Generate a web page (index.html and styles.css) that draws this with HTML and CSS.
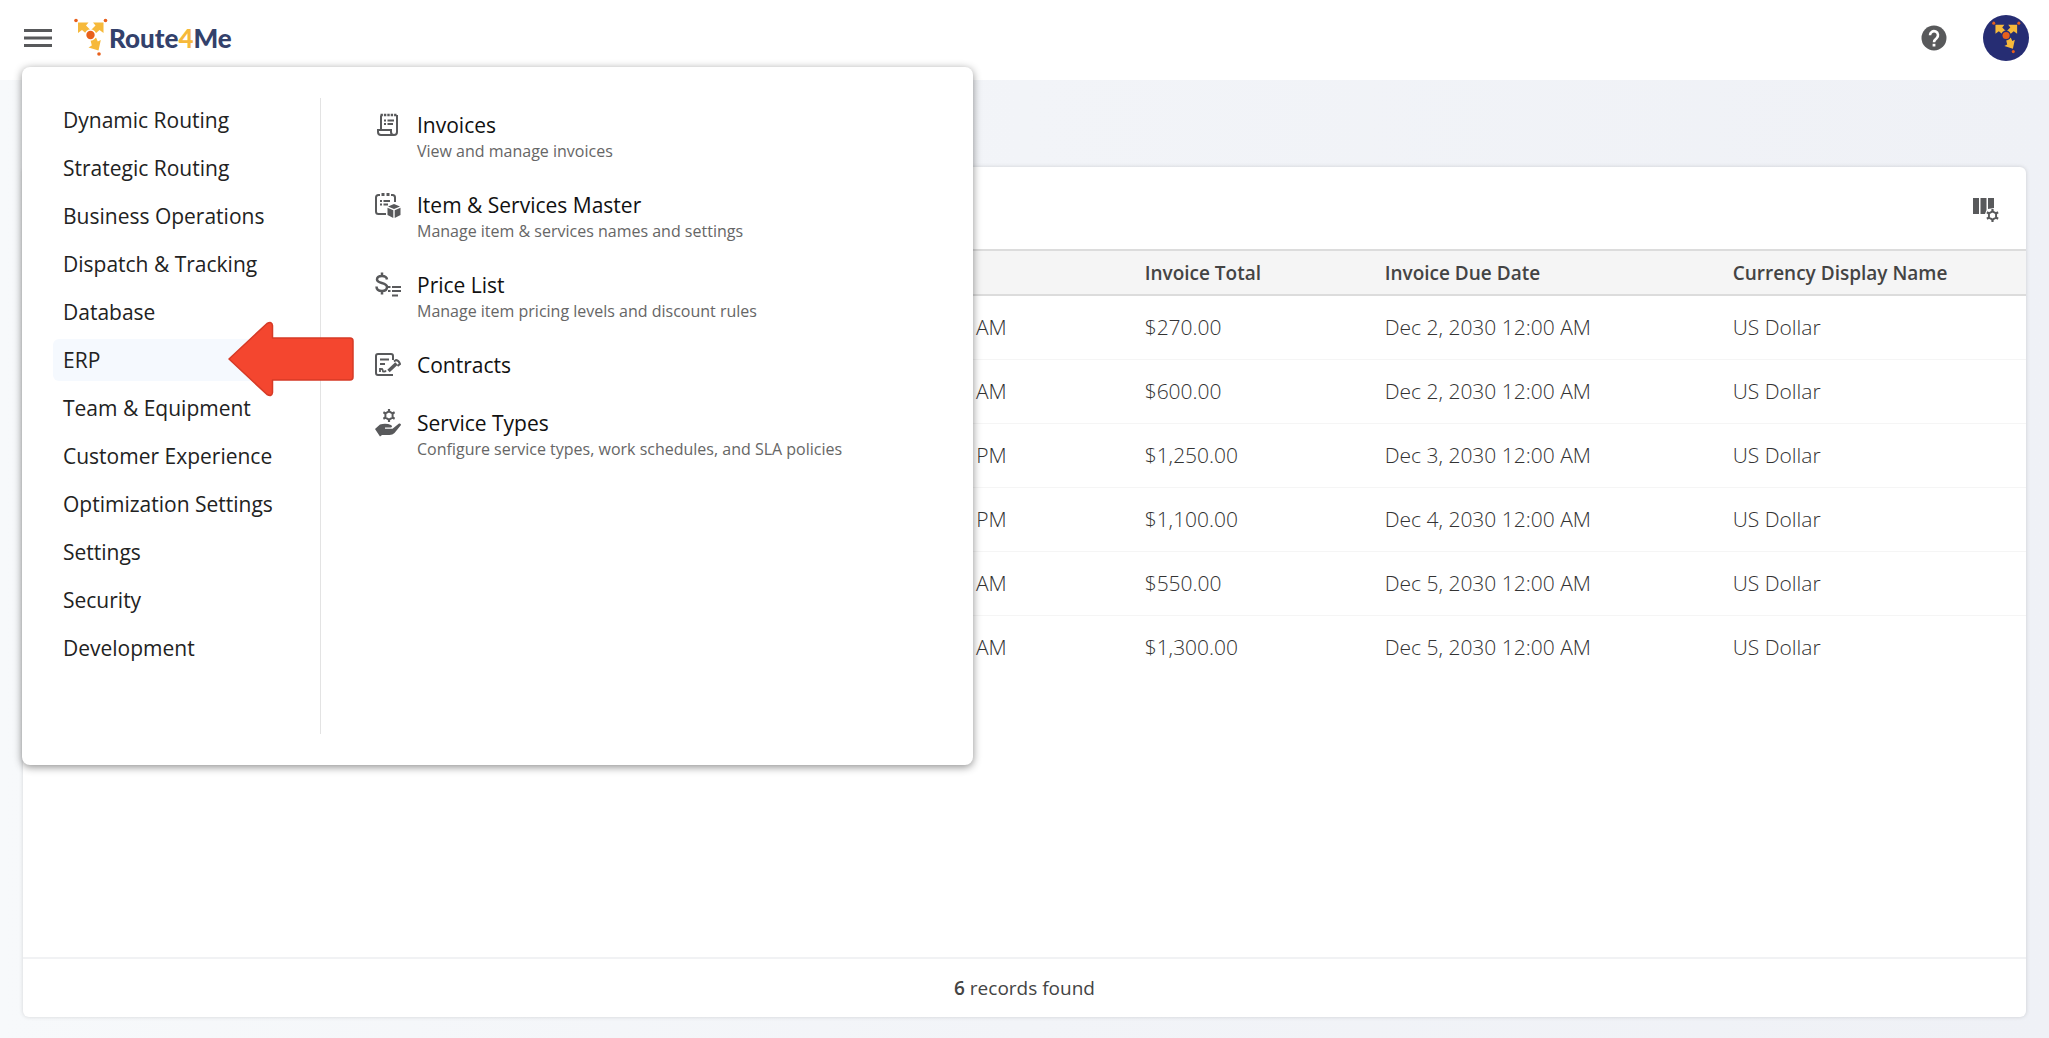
FILE: index.html
```html
<!DOCTYPE html>
<html lang="en">
<head>
    <meta charset="UTF-8">
    <meta name="viewport" content="width=device-width, initial-scale=1.0">
    <title>Route4Me</title>
    <link rel="stylesheet" href="styles.css">
</head>
<body>
    <!-- Shared icon shapes -->
    <svg class="sprite" aria-hidden="true">
        <symbol id="route-mark" viewBox="0 0 34 40">
            <g fill="#f6b93b">
                <path d="M4 4.500h10.500l-2.500 3 4.500 4.500-4 4-4.500-4-4 3z"/>
                <path d="M29.500 4.500H19l2.500 3L17 12l4 4 4.500-4 4 3z"/>
                <path d="M16.500 22l5.500-2.500 1.800 4 3-1.500-2.300 10.500-10-3 3.300-2z"/>
            </g>
            <circle cx="16.500" cy="17" r="5.800" class="mark-gap"/>
            <g fill="#e8601c">
                <circle cx="16.500" cy="17" r="4.200"/>
                <circle cx="2" cy="2.500" r="1.800"/>
                <circle cx="31.500" cy="2.500" r="1.800"/>
                <circle cx="25" cy="36" r="1.800"/>
            </g>
        </symbol>
        <symbol id="cog" viewBox="0 0 12 12">
            <path fill="none" stroke="currentColor" stroke-width="1.800" stroke-linejoin="round" d="M6 2.200l3.300 1.900v3.800L6 9.800 2.700 7.900V4.100z"/>
            <path stroke="currentColor" stroke-width="2" d="M6 0v2.500M6 9.500V12M.8 3l2.100 1.200M9.100 7.800L11.200 9M.8 9l2.100-1.200M9.100 4.200L11.200 3"/>
        </symbol>
    </svg>

    <header class="topbar">
        <button class="icon-button menu-toggle" aria-label="Menu" aria-expanded="true">
            <svg width="28" height="20" viewBox="0 0 28 20"><path stroke="currentColor" stroke-width="3" d="M0 2.500h28M0 10h28M0 17.500h28"/></svg>
        </button>
        <a class="logo" href="#">
            <svg class="logo-mark" width="34" height="40"><use href="#route-mark"/></svg>
            <span>Route<span class="four">4</span>Me</span>
        </a>
        <div class="topbar-actions">
            <button class="icon-button" aria-label="Help">
                <svg width="26" height="26" viewBox="0 0 26 26">
                    <circle cx="13" cy="13" r="12.500" fill="currentColor"/>
                    <path fill="none" stroke="#fff" stroke-width="2.600" d="M9 10.200a4 4 0 1 1 6.600 3c-1.500 1.200-2.600 1.900-2.600 4"/>
                    <path fill="#fff" d="M11.600 18.800h2.800v2.700h-2.800z"/>
                </svg>
            </button>
            <button class="avatar" aria-label="Account">
                <svg width="29" height="34"><use href="#route-mark"/></svg>
            </button>
        </div>
    </header>

    <!-- Main menu, opens over the page -->
    <nav class="menu" aria-label="Main menu">
        <ul class="menu-sections">
            <li><a href="#">Dynamic Routing</a></li>
            <li><a href="#">Strategic Routing</a></li>
            <li><a href="#">Business Operations</a></li>
            <li><a href="#">Dispatch &amp; Tracking</a></li>
            <li><a href="#">Database</a></li>
            <li class="active">
                <a href="#">ERP</a>
                <svg class="pointer" width="128" height="76" viewBox="0 0 128 76" aria-hidden="true">
                    <path fill="#f4462f" stroke="#d63a26" stroke-width="1.500" stroke-linejoin="round" d="M2 38L40 2.500q5-2.500 5.500 2V17H123q3 0 3 3v36q0 3-3 3H45.500v12.500q-.5 4.500-5.500 2z"/>
                </svg>
            </li>
            <li><a href="#">Team &amp; Equipment</a></li>
            <li><a href="#">Customer Experience</a></li>
            <li><a href="#">Optimization Settings</a></li>
            <li><a href="#">Settings</a></li>
            <li><a href="#">Security</a></li>
            <li><a href="#">Development</a></li>
        </ul>
        <ul class="menu-items">
            <li>
                <a href="#">
                    <svg width="26" height="26" viewBox="0 0 26 26" fill="none" stroke="currentColor" stroke-width="2">
                        <path d="M6 17V3.500M22 3v17a3 3 0 0 1-3 3H6a3 3 0 0 1-3-3v-2h13v2a3 3 0 0 0 3 3"/>
                        <path stroke-width="2.500" stroke-dasharray="2.400 1" d="M5.500 3h17"/>
                        <path d="M9 8.500h2M12.500 8.500H19M9 12h2M12.500 12H18"/>
                    </svg>
                    <span class="item-title">Invoices</span>
                    <span class="item-note">View and manage invoices</span>
                </a>
            </li>
            <li>
                <a href="#">
                    <svg width="26" height="26" viewBox="0 0 26 26" fill="none" stroke="currentColor" stroke-width="2">
                        <path d="M5 3H3.500Q1 3 1 5.500v14Q1 22 3.500 22H11M16 3h1.500Q20 3 20 5.500V10"/>
                        <path stroke-width="3" d="M6.500 2.500h3M11.500 2.500h3"/>
                        <path d="M5 9h2M8.500 9H15M5 12.500h2M8.500 12.500H13"/>
                        <path fill="currentColor" stroke="none" d="M19 12l6 2.500-6 2.500-6-2.500zM12.500 15.800l5.800 2.400V26l-5.800-3zM25.500 15.800l-5.800 2.400V26l5.800-3z"/>
                    </svg>
                    <span class="item-title">Item &amp; Services Master</span>
                    <span class="item-note">Manage item &amp; services names and settings</span>
                </a>
            </li>
            <li>
                <a href="#">
                    <svg width="26" height="26" viewBox="0 0 26 26" fill="none" stroke="currentColor" stroke-width="2.500">
                        <path d="M12 7.500Q11.500 4 7 4 2 4 2 7.500c0 4.500 10 2.500 10 7.500 0 3-2.500 4-5 4-4 0-5.500-2-5.500-4.500M7 .5V4M7 19v3.500"/>
                        <path stroke-width="2" d="M13 15h2.500M17 15h9M13 19h2.500M17 19h9M17 23.500h6"/>
                    </svg>
                    <span class="item-title">Price List</span>
                    <span class="item-note">Manage item pricing levels and discount rules</span>
                </a>
            </li>
            <li>
                <a href="#">
                    <svg width="26" height="26" viewBox="0 0 26 26" fill="none" stroke="currentColor" stroke-width="2">
                        <path d="M18 8V4q0-2-2-2H3Q1 2 1 4v17q0 2 2 2h15M5 7.500h9M5 12h5"/>
                        <path stroke-width="1.800" d="M5 16v4M5 18q2.500-3 3 1.500 2 .5 3-1"/>
                        <path stroke-width="3.500" d="M13.500 19l8-7.500"/>
                        <path d="M19 9.500l2-1.500q3 .5 4 4l-2.500 2"/>
                    </svg>
                    <span class="item-title">Contracts</span>
                </a>
            </li>
            <li>
                <a href="#">
                    <svg width="26" height="28" viewBox="0 0 26 28">
                        <use href="#cog" x="7.500" y="0" width="13" height="13"/>
                        <path fill="currentColor" d="M0 20l5-4.500q6-1.500 11 .5 2 1.500 0 2.500h-6v1.300h7.500L24 14.500q2-.5 2 1.500l-6.500 8q-2 2-5 2H7l-2 1.500z"/>
                    </svg>
                    <span class="item-title">Service Types</span>
                    <span class="item-note">Configure service types, work schedules, and SLA policies</span>
                </a>
            </li>
        </ul>
    </nav>

    <main class="page">
        <section class="card">
            <div class="card-toolbar">
                <button class="icon-button" aria-label="Configure columns">
                    <svg width="26" height="26" viewBox="0 0 26 26">
                        <path fill="currentColor" d="M0 1h6v16H0zM7.500 1h6v12l-1.500 4H7.500zM15 1h6v10l-6 1z"/>
                        <use href="#cog" x="13" y="12" width="13" height="13"/>
                    </svg>
                </button>
            </div>
            <table class="invoices">
                <thead>
                    <tr>
                        <th class="col-date"></th>
                        <th class="col-total">Invoice Total</th>
                        <th class="col-due">Invoice Due Date</th>
                        <th>Currency Display Name</th>
                    </tr>
                </thead>
                <tbody>
                    <tr><td class="col-date">AM</td><td>$270.00</td><td>Dec 2, 2030 12:00 AM</td><td>US Dollar</td></tr>
                    <tr><td class="col-date">AM</td><td>$600.00</td><td>Dec 2, 2030 12:00 AM</td><td>US Dollar</td></tr>
                    <tr><td class="col-date">PM</td><td>$1,250.00</td><td>Dec 3, 2030 12:00 AM</td><td>US Dollar</td></tr>
                    <tr><td class="col-date">PM</td><td>$1,100.00</td><td>Dec 4, 2030 12:00 AM</td><td>US Dollar</td></tr>
                    <tr><td class="col-date">AM</td><td>$550.00</td><td>Dec 5, 2030 12:00 AM</td><td>US Dollar</td></tr>
                    <tr><td class="col-date">AM</td><td>$1,300.00</td><td>Dec 5, 2030 12:00 AM</td><td>US Dollar</td></tr>
                </tbody>
            </table>
            <footer class="card-footer"><b>6</b> records found</footer>
        </section>
    </main>
</body>
</html>
```
FILE: styles.css
```css
* {
    box-sizing: border-box;
}

body {
    margin: 0;
    min-height: 100vh;
    display: flex;
    flex-direction: column;
    position: relative;
    font-family: "Open Sans", "Noto Sans", sans-serif;
    color: #222;
    background: linear-gradient(90deg, #f7f9fb, #f2f4f8 50%, #eff1f6);
}

ul {
    list-style: none;
    margin: 0;
    padding: 0;
}

a {
    color: inherit;
    text-decoration: none;
}

.sprite {
    position: absolute;
    width: 0;
    height: 0;
}

.icon-button {
    display: flex;
    padding: 0;
    border: none;
    background: none;
    color: #58595b;
    cursor: pointer;
}

/* Top bar */
.topbar {
    height: 80px;
    padding: 0 20px 4px 24px;
    display: flex;
    align-items: center;
    background: #fff;
}

.logo {
    display: flex;
    align-items: center;
    gap: 1px;
    margin-left: 22px;
    font: 900 26px/36px Lato, sans-serif;
    color: #33416b;
}

/* Ring between the centre dot and the arrows */
.mark-gap {
    fill: var(--mark-gap, #fff);
}

.four {
    color: #f6b93b;
}

.topbar-actions {
    display: flex;
    align-items: center;
    gap: 36px;
    margin-left: auto;
}

.avatar {
    --mark-gap: #262d73;
    width: 46px;
    height: 46px;
    padding: 0;
    display: flex;
    align-items: center;
    justify-content: center;
    border: none;
    border-radius: 50%;
    background: #262d73;
    cursor: pointer;
}

/* Menu panel over the page */
.menu {
    position: absolute;
    top: 67px;
    left: 22px;
    z-index: 2;
    width: 951px;
    padding: 31px;
    padding-right: 20px;
    display: flex;
    background: #fff;
    border-radius: 8px;
    box-shadow: 0 2px 8px rgba(0, 0, 0, 0.45);
}

.menu-sections {
    width: 268px;
    min-height: 636px;
    padding-top: 1px;
    display: flex;
    flex-direction: column;
    gap: 6px;
    border-right: 1px solid #e3e3e3;
}

.menu-sections li {
    position: relative;
    border-radius: 6px;
}

.menu-sections a {
    display: block;
    padding: 0 10px;
    font-size: 21px;
    line-height: 42px;
}

.active {
    background: #f5f9fe;
}

.pointer {
    position: absolute;
    top: -18px;
    left: 174px;
}

.menu-items {
    padding: 12px 0 0 54px;
    display: flex;
    flex-direction: column;
    gap: 28px;
}

.menu-items a {
    display: grid;
    grid-template-columns: 26px 1fr;
    column-gap: 16px;
    color: #111;
}

.menu-items svg {
    align-self: center;
    color: #58595b;
}

.item-title {
    font-size: 21px;
    line-height: 30px;
}

.item-note {
    grid-column: 2;
    font-size: 16px;
    line-height: 22px;
    color: #666;
}

/* Invoice list */
.page {
    flex-grow: 1;
    display: flex;
    padding: 87px 23px 21px;
}

.card {
    flex-grow: 1;
    display: flex;
    flex-direction: column;
    background: #fff;
    border-radius: 6px;
    box-shadow: 0 0 4px rgba(0, 0, 0, 0.15);
}

.card-toolbar {
    height: 82px;
    padding: 4px 27px 0;
    display: flex;
    align-items: center;
    justify-content: flex-end;
}

.invoices {
    width: 100%;
    table-layout: fixed;
    border-collapse: collapse;
}

.invoices th {
    height: 45px;
    padding: 0 20px;
    text-align: left;
    font-size: 19px;
    font-weight: 600;
    line-height: 24px;
    color: #444;
    background: #f5f5f5;
    border-top: 2px solid #dcdcdc;
    border-bottom: 2px solid #dcdcdc;
}

.invoices td {
    height: 64px;
    padding: 0 20px;
    font-size: 21px;
    font-weight: 300;
    color: #333;
    border-bottom: 1px solid #f5f5f5;
}

.invoices tr:last-child td {
    border-bottom: none;
}

.invoices .col-date {
    width: 55%;
    padding-right: 118px;
    text-align: right;
}

.col-total {
    width: 240px;
}

.col-due {
    width: 348px;
}

.card-footer {
    margin-top: auto;
    border-top: 2px solid #f1f2f4;
    font-size: 19px;
    line-height: 58px;
    text-align: center;
    color: #444;
}

.card-footer b {
    font-weight: 600;
}
```
